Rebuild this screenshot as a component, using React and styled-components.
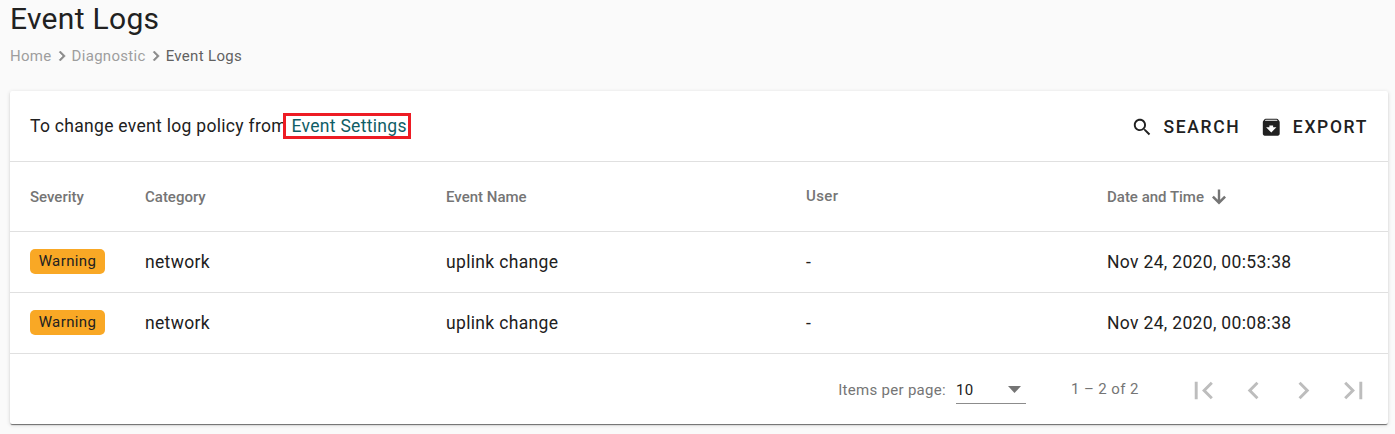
import React from "react";
import styled, { createGlobalStyle } from "styled-components";

const GlobalStyle = createGlobalStyle`
  * { box-sizing: border-box; }
  body {
    margin: 0;
    background: #fafafa;
    color: #212121;
    font-family: Roboto, "Liberation Sans", sans-serif;
    overflow: hidden;
  }
`;

const Page = styled.main`
  height: 434px;
  padding: 0 7px 0 10px;
  white-space: nowrap;
`;

const Title = styled.h1`
  margin: 0;
  font-size: 30px;
  line-height: 38px;
  font-weight: 400;
  letter-spacing: 0.3px;
`;

const Breadcrumbs = styled.nav`
  display: flex;
  align-items: center;
  height: 20px;
  margin: 8px 0 25px;
  font-size: 15px;
  letter-spacing: 0.3px;
  color: #9e9e9e;
`;

const Crumb = styled.span`
  color: ${(p) => (p.$current ? "#616161" : "#9e9e9e")};
  letter-spacing: ${(p) => (p.$current ? 0.33 : 0.3)}px;
`;

const CrumbChevron = styled.svg`
  width: 20px;
  height: 20px;
  fill: #8a8a8a;
`;

const Card = styled.section`
  height: 333px;
  background: #fff;
  border-radius: 2px;
  box-shadow: 0 2px 1px -1px rgba(0, 0, 0, 0.4), 0 1px 1px rgba(0, 0, 0, 0.2),
    0 1px 4px rgba(0, 0, 0, 0.14);
`;

const Toolbar = styled.div`
  display: flex;
  align-items: center;
  justify-content: space-between;
  height: 71px;
  padding: 0 20px;
  border-bottom: 1px solid #e0e0e0;
`;

const Policy = styled.p`
  margin: 0;
  font-size: 17.5px;
  letter-spacing: 0.3px;
  line-height: 24px;
`;

const SettingsLink = styled.a`
  position: relative;
  color: #0f5e66;
`;

const Highlight = styled.span`
  position: absolute;
  left: -9px;
  top: -3px;
  width: 128px;
  height: 26px;
  border: 3px solid #ed1c24;
`;

const Actions = styled.div`
  display: flex;
  gap: 20px;
  padding-top: 2px;
`;

const Action = styled.button`
  display: flex;
  align-items: center;
  gap: 10px;
  padding: 0;
  border: 0;
  background: none;
  color: #212121;
  font: 500 17.5px/24px Roboto, sans-serif;
  letter-spacing: 1.65px;
`;

const Icon = styled.svg`
  flex: none;
  width: ${(p) => p.$size}px;
  height: ${(p) => p.$size}px;
  fill: currentColor;
`;

const Row = styled.div`
  display: grid;
  grid-template-columns: 115px 301px 360px 301px 1fr;
  align-items: center;
  height: ${(p) => (p.$head ? 70 : 61)}px;
  padding-left: 20px;
  border-bottom: 1px solid #e0e0e0;
`;

const HeadCell = styled.div`
  display: flex;
  align-items: center;
  gap: 5px;
  padding-bottom: ${(p) => (p.$raised ? 2 : 0)}px;
  font-size: 15px;
  line-height: 20px;
  font-weight: 500;
  letter-spacing: ${(p) => (p.$raised ? 0.4 : 0)}px;
  color: #757575;
`;

const Cell = styled.div`
  font-size: 17.5px;
  line-height: 24px;
  letter-spacing: 0.33px;
`;

const Badge = styled.span`
  display: flex;
  align-items: center;
  justify-content: center;
  width: 75px;
  height: 25px;
  margin-bottom: 2px;
  padding-bottom: 1px;
  border-radius: 5px;
  background: #f9a825;
  font-size: 15px;
  letter-spacing: 0.4px;
`;

const Paginator = styled.div`
  display: flex;
  align-items: center;
  justify-content: flex-end;
  height: 70px;
  padding: 3px 17px 0 0;
  font-size: 15px;
  letter-spacing: 0.4px;
  color: #757575;
`;

const PageSizeLabel = styled.span`
  padding-bottom: 2px;
  letter-spacing: 0.3px;
`;

const PageSize = styled.div`
  display: flex;
  align-items: center;
  justify-content: space-between;
  width: 70px;
  height: 28px;
  margin: 0 0 2px 10px;
  padding: 1px 5px 0 0;
  border-bottom: 1px solid #8c8c8c;
  color: #212121;
`;

const Caret = styled.svg`
  width: 13px;
  height: 7px;
  fill: #757575;
`;

const Range = styled.span`
  width: 115px;
  margin-left: 45px;
  padding-bottom: 3px;
`;

const PageButtons = styled.div`
  display: flex;
  gap: 15px;
  color: #bdbdbd;
`;

const RIGHT = "M10 6 8.59 7.41 13.17 12l-4.58 4.59L10 18l6-6z";

const pageIcons = [
  "M18.41 16.59 13.82 12l4.59-4.59L17 6l-6 6 6 6zM6 6h2v12H6z",
  "M15.41 7.41 14 6l-6 6 6 6 1.41-1.41L10.83 12z",
  RIGHT,
  "M5.59 7.41 10.18 12l-4.59 4.59L7 18l6-6-6-6zM16 6h2v12h-2z",
];

const events = [
  { severity: "Warning", category: "network", name: "uplink change", user: "-", time: "Nov 24, 2020, 00:53:38" },
  { severity: "Warning", category: "network", name: "uplink change", user: "-", time: "Nov 24, 2020, 00:08:38" },
];

const Glyph = ({ d, size }) => (
  <Icon viewBox="0 0 24 24" $size={size}>
    <path d={d} />
  </Icon>
);

const Separator = () => (
  <CrumbChevron viewBox="0 0 24 24">
    <path d={RIGHT} stroke="#8a8a8a" strokeWidth="0.6" />
  </CrumbChevron>
);

export default function App() {
  return (
    <Page>
      <GlobalStyle />
      <Title>Event Logs</Title>
      <Breadcrumbs>
        <Crumb>Home</Crumb>
        <Separator />
        <Crumb>Diagnostic</Crumb>
        <Separator />
        <Crumb $current>Event Logs</Crumb>
      </Breadcrumbs>
      <Card>
        <Toolbar>
          <Policy>
            To change event log policy from{" "}
            <SettingsLink>
              Event Settings
              <Highlight />
            </SettingsLink>
          </Policy>
          <Actions>
            <Action>
              <Glyph
                size={22.5}
                d="M15.5 14h-.79l-.28-.27C15.41 12.59 16 11.11 16 9.5 16 5.91 13.09 3 9.5 3S3 5.91 3 9.5 5.91 16 9.5 16c1.61 0 3.09-.59 4.23-1.57l.27.28v.79l5 4.99L20.49 19l-4.99-5zm-6 0C7.01 14 5 11.99 5 9.5S7.01 5 9.5 5 14 7.01 14 9.5 11.99 14 9.5 14z"
              />
              SEARCH
            </Action>
            <Action>
              <Glyph
                size={22.5}
                d="M20.54 5.23l-1.39-1.68C18.88 3.21 18.47 3 18 3H6c-.47 0-.88.21-1.16.55L3.46 5.23C3.17 5.57 3 6.02 3 6.5V19c0 1.1.9 2 2 2h14c1.1 0 2-.9 2-2V6.5c0-.48-.17-.93-.46-1.27zM12 17.5L6.5 12H10v-2h4v2h3.500L12 17.5zM5.120 5l.81-1h12l.94 1H5.120z"
              />
              EXPORT
            </Action>
          </Actions>
        </Toolbar>
        <Row $head>
          <HeadCell>Severity</HeadCell>
          <HeadCell>Category</HeadCell>
          <HeadCell>Event Name</HeadCell>
          <HeadCell $raised>User</HeadCell>
          <HeadCell>
            Date and Time
            <Icon viewBox="0 0 20 20" $size={20}>
              <path d="M8.800 2.500h2.400v10.200l4-4L17 10.500l-7 7-7-7 1.800-1.800 4 4z" />
            </Icon>
          </HeadCell>
        </Row>
        {events.map((e) => (
          <Row key={e.time}>
            <Badge>{e.severity}</Badge>
            <Cell>{e.category}</Cell>
            <Cell>{e.name}</Cell>
            <Cell>{e.user}</Cell>
            <Cell>{e.time}</Cell>
          </Row>
        ))}
        <Paginator>
          <PageSizeLabel>Items per page:</PageSizeLabel>
          <PageSize>
            10
            <Caret viewBox="0 0 13 7">
              <path d="M0 0h13L6.500 7z" />
            </Caret>
          </PageSize>
          <Range>1 – 2 of 2</Range>
          <PageButtons>
            {pageIcons.map((d) => (
              <Glyph key={d} size={35} d={d} />
            ))}
          </PageButtons>
        </Paginator>
      </Card>
    </Page>
  );
}
